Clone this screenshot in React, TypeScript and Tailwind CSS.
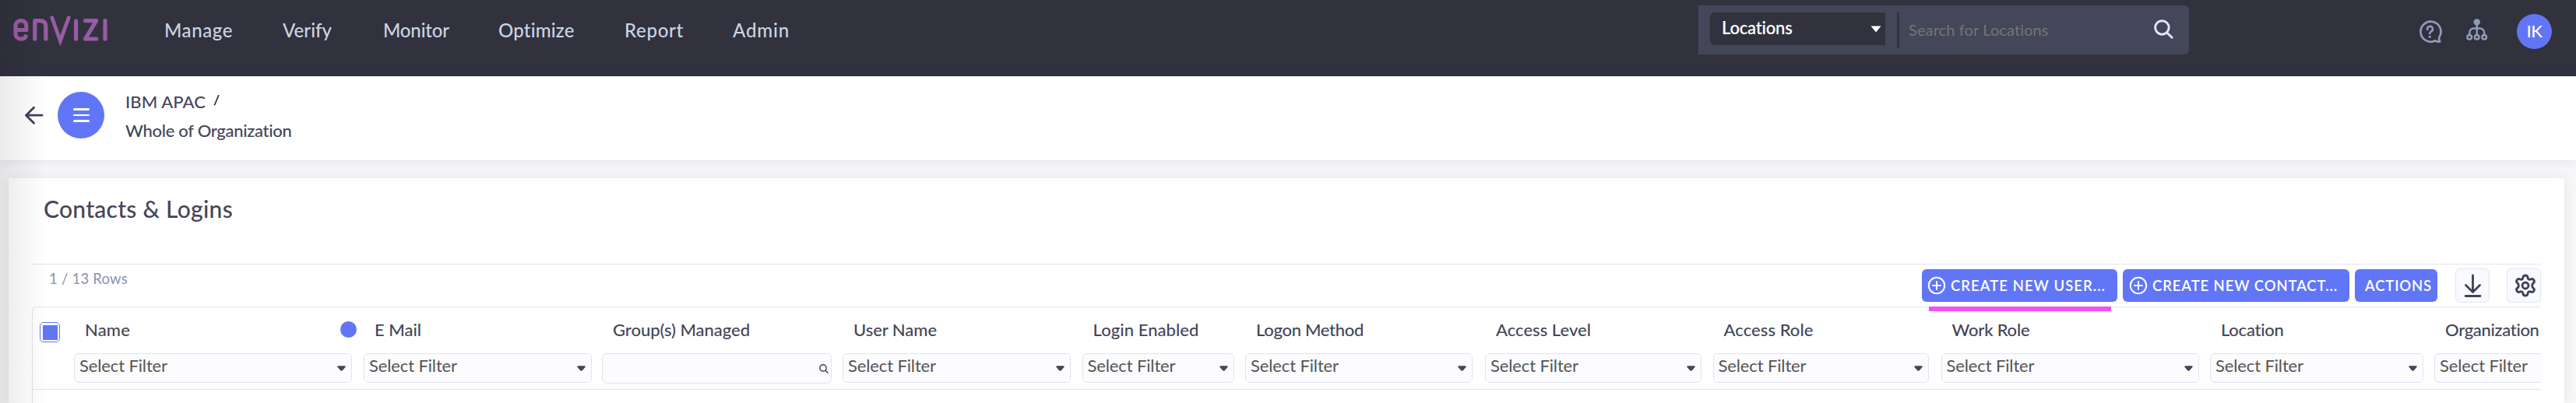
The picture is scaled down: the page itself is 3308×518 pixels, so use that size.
import { useLayoutEffect, useRef, useState } from "react";

/** Text whose tracking is adjusted so that it fills a given width. */
function FitText({ text, width, className = "" }: { text: string; width: number; className?: string }) {
  const ref = useRef<HTMLSpanElement>(null);
  const [spacing, setSpacing] = useState(0);
  useLayoutEffect(() => {
    const el = ref.current;
    if (!el) return;
    const previous = el.style.letterSpacing;
    el.style.letterSpacing = "0px";
    const natural = el.getBoundingClientRect().width;
    el.style.letterSpacing = previous;
    setSpacing((width - natural) / text.length);
  }, [text, width]);
  return (
    <span ref={ref} className={`inline-block shrink-0 whitespace-nowrap ${className}`} style={{ letterSpacing: spacing }}>
      {text}
    </span>
  );
}

const nav = [
  { label: "Manage", width: 88, box: "w-[152px]" },
  { label: "Verify", width: 63, box: "w-[129px]" },
  { label: "Monitor", width: 85, box: "w-[148px]" },
  { label: "Optimize", width: 98, box: "w-[162px]" },
  { label: "Report", width: 76, box: "w-[139px]" },
  { label: "Admin", width: 73, box: "w-[100px]" },
];

const columns = [
  { label: "Name", width: 58, col: "w-[372px]", field: "w-[357px]", dot: true },
  { label: "E Mail", width: 60, col: "w-[306px]", field: "w-[293px]" },
  { label: "Group(s) Managed", width: 176, col: "w-[309px]", field: "w-[295px]", search: true },
  { label: "User Name", width: 107, col: "w-[307.5px]", field: "w-[293px]" },
  { label: "Login Enabled", width: 136, col: "w-[209.5px]", field: "w-[195px]" },
  { label: "Logon Method", width: 138, col: "w-[308px]", field: "w-[292px]" },
  { label: "Access Level", width: 122, col: "w-[292.5px]", field: "w-[278px]" },
  { label: "Access Role", width: 115, col: "w-[293px]", field: "w-[277px]" },
  { label: "Work Role", width: 100, col: "w-[345.5px]", field: "w-[331px]" },
  { label: "Location", width: 81, col: "w-[288px]", field: "w-[274px]" },
  { label: "Organization", width: 121, col: "w-[300px]", field: "w-[290px]" },
];

function Logo() {
  return (
    <svg className="mt-[18px] ml-[14px] h-[42px] w-[130px] shrink-0" viewBox="14 18 130 42" fill="none" stroke="#985ca3" strokeWidth="5.2" strokeLinecap="round" strokeLinejoin="round">
      <path d="M20 38.5H33.8V33.5C33.8 29 31 26.6 27 26.6S20 29 20 33.5V43.5C20 47.5 23 50.1 27 50.1C30 50.1 32 49 33 46.8" />
      <path d="M44.8 50V26.6H51C56 26.6 58.8 29 58.8 33.5V50" />
      <path d="M66.8 22.8L77.4 52.5L88.2 22.8" strokeLinejoin="miter" strokeWidth="4.8" />
      <path d="M97.6 27V50M109.6 26.6H123.6L109.6 50H123.6M135 26.6V50" />
    </svg>
  );
}

function SearchGlyph({ className }: { className: string }) {
  return (
    <svg className={className} viewBox="0 0 24 24" fill="none" stroke="currentColor" strokeWidth="2.8" strokeLinecap="round">
      <circle cx="10" cy="10" r="8.4" />
      <path d="M16 16.3L22.3 22.3" />
    </svg>
  );
}

function PlusCircle() {
  return (
    <svg className="h-6 w-6 shrink-0" viewBox="0 0 24 24" fill="none" stroke="white" strokeWidth="2" strokeLinecap="round">
      <circle cx="12" cy="12" r="10.2" />
      <path d="M12 7V17M7 12H17" />
    </svg>
  );
}

function Header() {
  return (
    <header className="flex h-[98px] items-start bg-[#31323e]">
      <Logo />
      <nav className="ml-[67px] flex pt-[23px] text-[24px] leading-8 font-medium text-[#cdd3e3]">
        {nav.map((n) => (
          <div key={n.label} className={n.box}>
            <FitText text={n.label} width={n.width} />
          </div>
        ))}
      </nav>
      <div className="mt-[7px] ml-[1140px] flex h-[63px] w-[630px] shrink-0 rounded-r-[6px] bg-[#444659]">
        <div className="mt-[9px] ml-[15px] flex h-[42px] w-[225px] items-center rounded-l-[6px] bg-[#31323e] pr-[5px] pl-[15px] text-white">
          <FitText text="Locations" width={91} className="pb-[2px] text-[22px] leading-8 font-semibold" />
          <svg className="ml-auto h-[9px] w-[14px]" viewBox="0 0 14 9" fill="white">
            <path d="M0.5 0.5H13.5L7 8.5Z" />
          </svg>
        </div>
        <div className="mt-[9px] ml-[15px] h-[45px] w-[3px] bg-[#31323e]" />
        <div className="flex grow items-start pl-[12px]">
          <FitText text="Search for Locations" width={180} className="mt-[15px] text-[20px] leading-8 text-[#757575]" />
        </div>
        <SearchGlyph className="mt-[18px] mr-[20px] h-[25px] w-[25px] text-[#e2e8f5]" />
      </div>
      <svg className="mt-[25px] ml-[294px] h-8 w-8 shrink-0" viewBox="0 0 32 32" fill="none" stroke="#8f9bb8" strokeWidth="2.7" strokeLinecap="round" strokeLinejoin="round">
        <path d="M27.6 22.4A13 13 0 1 0 22.3 27.3C23.8 28.6 26 29 28.2 28.4C27.2 27 26.8 24.6 27.6 22.4Z" />
        <path d="M12.2 13A3.4 3.4 0 1 1 17 15.4C15.7 16.2 15.2 16.8 15.2 18.2" strokeWidth="2.5" />
        <circle cx="15.2" cy="22.3" r="1.6" fill="#8f9bb8" stroke="none" />
      </svg>
      <svg className="mt-[24px] ml-[30px] h-[28px] w-[28px] shrink-0" viewBox="0 0 28 28" fill="none" stroke="#8f9bb8" strokeWidth="2.5">
        <circle cx="13.7" cy="4.4" r="4.2" fill="#8f9bb8" stroke="none" />
        <path d="M13.7 6V20M4.2 20V18.5C4.2 14.5 7 12.5 10 12.5H17.4C20.4 12.5 23.2 14.5 23.2 18.5V20" />
        <circle cx="4.2" cy="23.7" r="2.8" />
        <circle cx="13.7" cy="23.7" r="2.8" />
        <circle cx="23.2" cy="23.7" r="2.8" />
      </svg>
      <div className="mt-[18px] ml-[37px] flex h-[45px] w-[45px] shrink-0 items-center justify-center rounded-full bg-[#6176f7] pb-[2px] text-white">
        <FitText text="IK" width={20} className="text-[22px] leading-8 font-medium" />
      </div>
    </header>
  );
}

function Breadcrumb() {
  return (
    <section className="relative flex h-[108px] items-start bg-white text-[22px] font-medium text-[#444659] shadow-[0_2px_12px_rgba(60,60,110,0.10)]">
      <svg className="mt-[37px] ml-[30px] h-[26px] w-[28px] shrink-0" viewBox="0 0 28 26" fill="none" stroke="#3f4157" strokeWidth="2.8" strokeLinecap="round" strokeLinejoin="round">
        <path d="M24 13.2H3.5M13.5 3.2L3.5 13.2L13.5 23.2" />
      </svg>
      <button className="mt-5 ml-4 flex h-[60px] w-[60px] shrink-0 flex-col items-center justify-center gap-[5px] rounded-full bg-[#6176f7]">
        <span className="h-[2.8px] w-[21px] rounded-full bg-white" />
        <span className="h-[2.8px] w-[21px] rounded-full bg-white" />
        <span className="h-[2.8px] w-[21px] rounded-full bg-white" />
      </button>
      <div className="ml-[27px] flex flex-col pt-[14px] leading-[37px]">
        <div className="flex">
          <FitText text="IBM APAC" width={103} />
          <span className="ml-[10px] text-[18px] leading-[33px] text-black">/</span>
        </div>
        <FitText text="Whole of Organization" width={214} />
      </div>
    </section>
  );
}

function Toolbar() {
  return (
    <div className="flex h-[55px] items-start border-t-[1.5px] border-[#e2e6f0]">
      <FitText text="1 / 13 Rows" width={101} className="mt-[6px] ml-[22px] text-[18.5px] leading-6 text-[#8793b2]" />
      <div className="ml-auto flex items-start pt-[6px] text-[18.5px] font-semibold text-white">
        <div className="relative flex h-[42px] w-[251px] items-center rounded-[6px] bg-[#6176f7] pl-[7px]">
          <PlusCircle />
          <FitText text="CREATE NEW USER..." width={199} className="mt-px ml-[6px]" />
          <div className="absolute top-[48px] left-[9px] h-[6px] w-[234px] bg-[#ee52f7]" />
        </div>
        <div className="ml-[7px] flex h-[42px] w-[291px] items-center rounded-[6px] bg-[#6176f7] pl-[8px]">
          <PlusCircle />
          <FitText text="CREATE NEW CONTACT..." width={238} className="mt-px ml-[6px]" />
        </div>
        <div className="ml-[7px] flex h-[42px] w-[106px] items-center rounded-[6px] bg-[#6176f7] pl-[13px]">
          <FitText text="ACTIONS" width={86} className="mt-px" />
        </div>
        <div className="-mt-px ml-[23px] flex h-11 w-11 items-center justify-center rounded-[6px] border border-[#e2e6f0] bg-[#f9faff]">
          <svg className="h-[32px] w-[24px]" viewBox="0 0 24 32" fill="none" stroke="#3f4157" strokeWidth="2.8" strokeLinecap="round" strokeLinejoin="round">
            <path d="M12.5 2.8V24.5M3.5 15.5L12.5 24.5L21.5 15.5M3.2 29.5H22" />
          </svg>
        </div>
        <div className="-mt-px ml-[22px] flex h-11 w-11 items-center justify-center rounded-[6px] border border-[#e2e6f0] bg-[#f9faff]">
          <svg className="ml-[3px] h-[30px] w-[30px]" viewBox="0 0 30 30" fill="none" stroke="#3f4157" strokeWidth="2.9" strokeLinejoin="round">
            <path d="M12.1 4.2C12.5 1.2 17.5 1.2 17.9 4.2C18.2 6.8 20 7.9 22.4 6.8C25.2 5.5 27.8 9.9 25.3 11.7C23.1 13.3 23.1 16.7 25.3 18.3C27.8 20.1 25.2 24.5 22.4 23.2C20 22.1 18.2 23.2 17.9 25.8C17.5 28.8 12.5 28.8 12.1 25.8C11.8 23.2 10 22.1 7.6 23.2C4.8 24.5 2.2 20.1 4.7 18.3C6.9 16.7 6.9 13.3 4.7 11.7C2.2 9.9 4.8 5.5 7.6 6.8C10 7.9 11.8 6.8 12.1 4.2Z" />
            <circle cx="15" cy="15" r="4" />
          </svg>
        </div>
      </div>
    </div>
  );
}

function Table() {
  return (
    <div className="h-[130px] overflow-hidden rounded-tl-[6px] border-t border-l border-[#dfe4ee]">
      <div className="flex h-[106px] w-[3400px] border-b border-[#dfe4ee]">
        <div className="flex w-[53px] shrink-0 items-start pt-[19px] pl-[9px]">
          <div className="h-[26px] w-[26px] rounded-[5px] border border-[#6176f7] bg-white p-[2.5px]">
            <div className="h-[19px] w-[19px] bg-[#6176f7]" />
          </div>
        </div>
        {columns.map((c) => (
          <div key={c.label} className={`shrink-0 ${c.col}`}>
            <div className="flex h-[59px] items-start pt-[10px] pl-[14px] text-[22px] leading-[38px] font-medium text-[#444659]">
              <FitText text={c.label} width={c.width} />
              {c.dot && <span className="mt-[8px] mr-[9px] ml-auto h-[21px] w-[21px] rounded-full bg-[#6176f7]" />}
            </div>
            {c.search ? (
              <div className={`flex h-[39px] items-center justify-end rounded-[6px] border border-[#e0e3ef] bg-[#fcfcff] pr-[3px] ${c.field}`}>
                <SearchGlyph className="h-[12px] w-[12px] text-[#3f4157]" />
              </div>
            ) : (
              <div className={`flex h-[38px] items-center rounded-[6px] border border-[#e0e3ef] bg-[#fcfcff] pr-[7px] pl-[6px] ${c.field}`}>
                <FitText text="Select Filter" width={113} className="pb-[6px] text-[22px] leading-7 text-[#555555]" />
                <svg className="ml-auto h-[7px] w-[11px]" viewBox="0 0 11 7" fill="#444659">
                  <path d="M0.8 0.2H10.2L10.8 1.5L6.8 6.3Q5.5 7 4.2 6.3L0.2 1.5Z" />
                </svg>
              </div>
            )}
          </div>
        ))}
      </div>
    </div>
  );
}

export default function App() {
  return (
    <div className="relative h-[518px] w-[3308px] overflow-hidden bg-[#f7f7f9] font-['Lato','Open_Sans',sans-serif]">
      <Header />
      <Breadcrumb />
      <main className="mt-[23px] mr-[15px] ml-[11px] h-[289px] bg-white pr-[30px] pl-[30px] shadow-[0_0_14px_rgba(40,40,60,0.09)]">
        <h1 className="h-[110px] pt-[21px] pl-[15px] text-[30px] leading-9 font-medium text-[#444659]">
          <FitText text="Contacts & Logins" width={243} />
        </h1>
        <Toolbar />
        <Table />
      </main>
      <div className="pointer-events-none absolute inset-y-0 left-0 w-[60px] bg-linear-to-r from-black/8 to-transparent" />
    </div>
  );
}
